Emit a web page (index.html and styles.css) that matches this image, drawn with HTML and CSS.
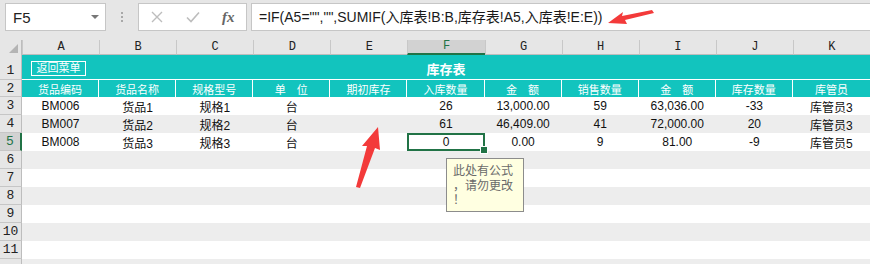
FILE: index.html
```html
<!DOCTYPE html>
<html>
<head>
    <meta charset="UTF-8">
    <title>库存表</title>
    <link rel="stylesheet" href="styles.css">
</head>
<body>
    <div class="app">
        <div class="formula-bar">
            <div class="name-box">
                <span>F5</span>
                <span class="drop"></span>
            </div>
            <div class="grip"><i></i><i></i><i></i></div>
            <div class="fx-buttons">
                <span class="fx-btn">
                    <svg width="12" height="12" viewBox="0 0 12 12"><path d="M1 1L11 11M11 1L1 11" stroke="#bdbdbd" stroke-width="1.4" fill="none"/></svg>
                </span>
                <span class="fx-btn">
                    <svg width="14" height="12" viewBox="0 0 14 12"><path d="M1 6.5L5 10.5L13 1.5" stroke="#bdbdbd" stroke-width="1.6" fill="none"/></svg>
                </span>
                <span class="fx-btn fx">fx</span>
            </div>
            <div class="formula-input">=IF(A5="","",SUMIF(入库表!B:B,库存表!A5,入库表!E:E))</div>
        </div>

        <div class="sheet">
            <div class="row col-heads">
                <div class="corner"><span class="tri"></span></div>
                <div class="col-head">A</div>
                <div class="col-head">B</div>
                <div class="col-head">C</div>
                <div class="col-head">D</div>
                <div class="col-head">E</div>
                <div class="col-head active">F</div>
                <div class="col-head">G</div>
                <div class="col-head">H</div>
                <div class="col-head">I</div>
                <div class="col-head">J</div>
                <div class="col-head">K</div>
            </div>

            <div class="row title-row">
                <div class="row-head">1</div>
                <div class="title-cell">
                    <span class="back-btn">返回菜单</span>
                    <span class="title">库存表</span>
                </div>
            </div>

            <div class="row field-row">
                <div class="row-head">2</div>
                <div class="field">货品编码</div>
                <div class="field">货品名称</div>
                <div class="field">规格型号</div>
                <div class="field">单　位</div>
                <div class="field">期初库存</div>
                <div class="field">入库数量</div>
                <div class="field">金　额</div>
                <div class="field">销售数量</div>
                <div class="field">金　额</div>
                <div class="field">库存数量</div>
                <div class="field">库管员</div>
            </div>

            <div class="row data">
                <div class="row-head">3</div>
                <div class="cell">BM006</div><div class="cell">货品1</div><div class="cell">规格1</div><div class="cell">台</div><div class="cell"></div>
                <div class="cell">26</div><div class="cell">13,000.00</div><div class="cell">59</div><div class="cell">63,036.00</div><div class="cell">-33</div><div class="cell">库管员3</div>
            </div>
            <div class="row data band">
                <div class="row-head">4</div>
                <div class="cell">BM007</div><div class="cell">货品2</div><div class="cell">规格2</div><div class="cell">台</div><div class="cell"></div>
                <div class="cell">61</div><div class="cell">46,409.00</div><div class="cell">41</div><div class="cell">72,000.00</div><div class="cell">20</div><div class="cell">库管员3</div>
            </div>
            <div class="row data">
                <div class="row-head active">5</div>
                <div class="cell">BM008</div><div class="cell">货品3</div><div class="cell">规格3</div><div class="cell">台</div><div class="cell"></div>
                <div class="cell selected">0</div><div class="cell">0.00</div><div class="cell">9</div><div class="cell">81.00</div><div class="cell">-9</div><div class="cell">库管员5</div>
            </div>
            <div class="row data band"><div class="row-head">6</div></div>
            <div class="row data"><div class="row-head">7</div></div>
            <div class="row data band"><div class="row-head">8</div></div>
            <div class="row data"><div class="row-head">9</div></div>
            <div class="row data band"><div class="row-head">10</div></div>
            <div class="row data"><div class="row-head">11</div></div>
            <div class="row data band"><div class="row-head"></div></div>

            <div class="comment">
                <div>此处有公式</div>
                <div>，请勿更改</div>
                <div>！</div>
            </div>
        </div>

        <svg class="marks" width="870" height="264" viewBox="0 0 870 264">
            <polygon points="652,10 622,16 623,12 608,23 627,24 625,20 654,13" fill="#f33a3a"/>
            <polygon points="356,187 367,146 362,146 378,127 380,150 375,148 360,188" fill="#f33a3a"/>
        </svg>
    </div>
</body>
</html>
```

FILE: styles.css
```css
body {
    margin: 0;
    padding: 0;
    width: 870px;
    height: 264px;
    overflow: hidden;
    background-color: #e6e6e6;
    font-family: "Liberation Sans", "Noto Sans CJK SC", sans-serif;
}
.app {
    position: relative;
    height: 264px;
}
.formula-bar {
    display: flex;
    align-items: center;
    height: 40px;
    padding: 0 0 6px 5px;
    box-sizing: border-box;
}
.name-box {
    display: flex;
    align-items: center;
    justify-content: space-between;
    width: 101px;
    height: 28px;
    box-sizing: border-box;
    padding: 0 6px 0 7px;
    background-color: #fff;
    border: 1px solid #c6c6c6;
    font-size: 15px;
    color: #222;
}
.drop {
    width: 0;
    height: 0;
    border-left: 4px solid transparent;
    border-right: 4px solid transparent;
    border-top: 4px solid #777;
}
.grip {
    display: flex;
    flex-direction: column;
    gap: 2px;
    width: 32px;
    align-items: center;
}
.grip i {
    width: 2px;
    height: 2px;
    background-color: #a8a8a8;
}
.fx-buttons {
    display: flex;
    align-items: center;
    width: 109px;
    height: 28px;
    box-sizing: border-box;
    background-color: #fff;
    border: 1px solid #c6c6c6;
}
.fx-btn {
    display: flex;
    align-items: center;
    justify-content: center;
    width: 36px;
}
.fx-btn.fx {
    font-family: "Liberation Serif", serif;
    font-style: italic;
    font-size: 15px;
    font-weight: bold;
    color: #666;
}
.formula-input {
    flex: 1;
    height: 28px;
    line-height: 26px;
    margin-left: 4px;
    box-sizing: border-box;
    padding-left: 7px;
    background-color: #fff;
    border: 1px solid #c6c6c6;
    border-right: none;
    font-size: 14px;
    color: #1a1a1a;
    white-space: nowrap;
}

/* grid */
.sheet {
    position: relative;
}
.row {
    display: grid;
    grid-template-columns: 22px repeat(11, 1fr);
    height: 18px;
    background-color: #fff;
}
.row.band {
    background-color: #ededed;
}
.col-heads {
    height: 15px;
    background-color: #e6e6e6;
}
.corner {
    position: relative;
    border-right: 1px solid #bdbdbd;
}
.tri {
    position: absolute;
    right: 3px;
    bottom: 2px;
    width: 0;
    height: 0;
    border-left: 9px solid transparent;
    border-bottom: 9px solid #b4b4b4;
}
.col-head {
    display: flex;
    align-items: flex-end;
    justify-content: center;
    font-family: "Liberation Mono", monospace;
    font-size: 12px;
    color: #222;
    border-left: 1px solid #c8c8c8;
    border-bottom: 1px solid #bdbdbd;
    line-height: 13px;
}
.col-head.active {
    background-color: #d2d2d2;
    color: #217346;
    border-bottom: 2px solid #217346;
}
.row-head {
    display: flex;
    align-items: center;
    justify-content: center;
    background-color: #e6e6e6;
    border-right: 1px solid #bdbdbd;
    border-bottom: 1px solid #c6c6c6;
    box-sizing: border-box;
    font-family: "Liberation Mono", monospace;
    font-size: 13px;
    color: #222;
}
.row-head.active {
    background-color: #d2d2d2;
    color: #217346;
    border-right: 2px solid #217346;
}
.title-row {
    height: 25px;
}
.title-row .row-head {
    align-items: flex-end;
    padding-bottom: 1px;
}
.title-cell {
    grid-column: 2 / -1;
    position: relative;
    display: flex;
    align-items: center;
    justify-content: center;
    background-color: #12c4be;
    border-bottom: 1px solid #fff;
}
.back-btn {
    position: absolute;
    left: 9px;
    top: 6px;
    width: 55px;
    height: 15px;
    box-sizing: border-box;
    border: 1px solid #fff;
    color: #fff;
    font-size: 11px;
    line-height: 13px;
    text-align: center;
}
.title {
    color: #fff;
    font-weight: bold;
    font-size: 13px;
    padding-top: 2px;
}
.field-row {
    height: 17px;
}
.field {
    display: flex;
    align-items: center;
    justify-content: center;
    background-color: #12c4be;
    border-right: 1px solid #fff;
    color: #fff;
    font-size: 11px;
}
.field:last-child {
    border-right: none;
}
.cell {
    display: flex;
    align-items: center;
    justify-content: center;
    font-size: 12px;
    color: #111;
    white-space: nowrap;
}
.cell.selected {
    position: relative;
    box-shadow: inset 0 0 0 2px #217346;
}
.cell.selected::after {
    content: "";
    position: absolute;
    right: -3px;
    bottom: -3px;
    width: 6px;
    height: 6px;
    background-color: #217346;
    border: 1px solid #fff;
}
.comment {
    position: absolute;
    left: 446px;
    top: 118px;
    width: 78px;
    height: 54px;
    box-sizing: border-box;
    padding: 4px 0 0 6px;
    background-color: #ffffe1;
    border: 1px solid #8c8c8c;
    font-family: "Noto Sans CJK SC", sans-serif;
    font-size: 12px;
    line-height: 14.5px;
    color: #6a6a6a;
}
.marks {
    position: absolute;
    left: 0;
    top: 0;
    pointer-events: none;
}
```
